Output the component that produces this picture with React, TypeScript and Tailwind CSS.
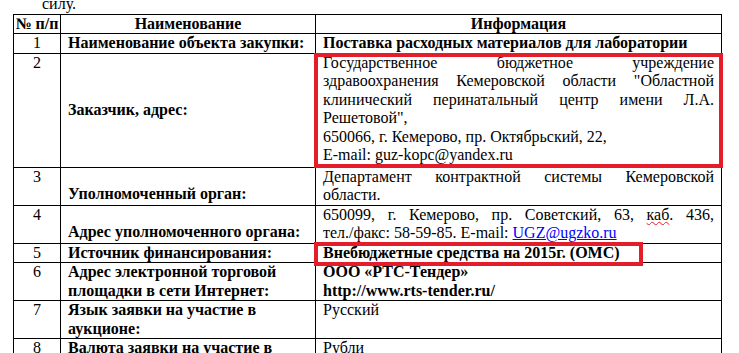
export default function App() {
  const base = "border border-black leading-[18.5px] p-0";
  const num = `${base} align-top text-center`;
  const label = `${base} px-[7px] font-bold align-middle`;
  const info = `${base} align-top px-[7px]`;
  const just = "text-justify [text-align-last:justify]";

  return (
    <div className="h-[353px] overflow-hidden bg-white text-black text-[16px] [font-family:'Liberation_Serif','Times_New_Roman',serif]">
      <p className="-mt-[5px] pl-[42px] leading-[18.5px]">силу.</p>
      <table className="ml-[13px] w-[708px] table-fixed border-collapse">
        <colgroup>
          <col className="w-[47px]" />
          <col className="w-[255px]" />
          <col className="w-[406px]" />
        </colgroup>
        <tbody>
          <tr>
            <td className={`${num} font-bold`}>№ п/п</td>
            <td className={`${base} text-center font-bold`}>Наименование</td>
            <td className={`${base} text-center font-bold`}>Информация</td>
          </tr>
          <tr>
            <td className={num}>1</td>
            <td className={label}>Наименование объекта закупки:</td>
            <td className={`${info} font-bold`}>Поставка расходных материалов для лаборатории</td>
          </tr>
          <tr>
            <td className={num}>2</td>
            <td className={label}>Заказчик, адрес:</td>
            <td className={`${info} relative pb-[2px]`}>
              <div className={just}>Государственное бюджетное учреждение</div>
              <div className={just}>здравоохранения Кемеровской области "Областной</div>
              <div className={just}>клинический перинатальный центр имени Л.А.</div>
              <div>Решетовой",</div>
              <div>650066, г. Кемерово, пр. Октябрьский, 22,</div>
              <div>E-mail: guz-kopc@yandex.ru</div>
              {/* highlight frame */}
              <div className="absolute left-[-2px] top-[-1px] right-[-2px] bottom-[-1px] border-4 border-[#e31e2a]" />
            </td>
          </tr>
          <tr>
            <td className={num}>3</td>
            <td className={`${label} pt-[16px]`}>Уполномоченный орган:</td>
            <td className={info}>
              <div className={just}>Департамент контрактной системы Кемеровской</div>
              <div>области.</div>
            </td>
          </tr>
          <tr>
            <td className={num}>4</td>
            <td className={`${label} pt-[16px]`}>Адрес уполномоченного органа:</td>
            <td className={info}>
              <div className={just}>
                650099, г. Кемерово, пр. Советский, 63,{" "}
                <span className="underline decoration-wavy decoration-[#e31e2a] decoration-1">каб</span>. 436,
              </div>
              <div>
                тел./факс: 58-59-85. E-mail:{" "}
                <a href="#" className="text-[#0000ff] underline">UGZ@ugzko.ru</a>
              </div>
            </td>
          </tr>
          <tr>
            <td className={num}>5</td>
            <td className={label}>Источник финансирования:</td>
            <td className={`${info} relative font-bold`}>
              Внебюджетные средства на 2015г. (ОМС)
              <div className="absolute left-[-2px] top-[-2px] w-[329px] bottom-[-4px] border-4 border-[#e31e2a]" />
            </td>
          </tr>
          <tr>
            <td className={num}>6</td>
            <td className={label}>Адрес электронной торговой площадки в сети Интернет:</td>
            <td className={`${info} font-bold`}>
              <div>ООО «РТС-Тендер»</div>
              <div>http://www.rts-tender.ru/</div>
            </td>
          </tr>
          <tr>
            <td className={num}>7</td>
            <td className={label}>Язык заявки на участие в аукционе:</td>
            <td className={info}>Русский</td>
          </tr>
          <tr>
            <td className={num}>8</td>
            <td className={label}>Валюта заявки на участие в аукционе:</td>
            <td className={info}>Рубли</td>
          </tr>
        </tbody>
      </table>
    </div>
  );
}
